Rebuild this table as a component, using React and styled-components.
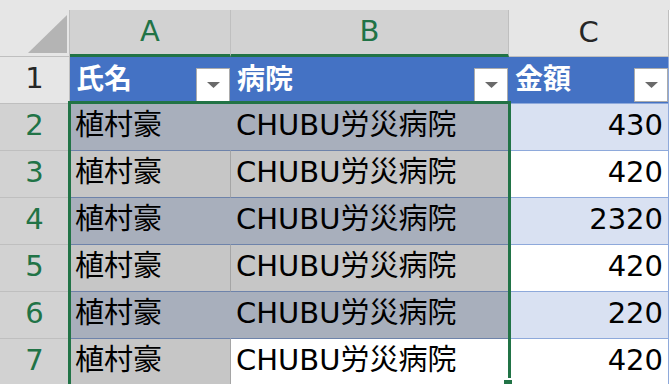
import React from 'react'
import styled, { createGlobalStyle } from 'styled-components'

const GREEN = '#217346'

const GlobalStyle = createGlobalStyle`
    body {
        margin: 0;
        background: #fff;
        font-family: "DejaVu Sans", "Noto Sans CJK JP", sans-serif;
    }
`

const Page = styled.div`
    width: 670px;
    height: 384px;
    overflow: hidden;
    background: #fff;
`
const TopStrip = styled.div`
    height: 10px;
    background: #e6e6e6;
`
const Sheet = styled.div`
    position: relative;
    display: grid;
    grid-template-columns: 70px 161px 278px 160px;
    grid-auto-rows: 47px;
    font-size: 29px;
    line-height: 1.2;
`
const Corner = styled.div`
    background: #e6e6e6;
    border-right: 1px solid #bfbfbf;
    border-bottom: 1px solid #bfbfbf;

    svg {
        display: block;
    }
`
const ColHeader = styled.div`
    display: flex;
    align-items: center;
    justify-content: center;
    padding-bottom: 2px;
    box-sizing: border-box;
    background: ${p => (p.$selected ? '#d2d2d2' : '#e6e6e6')};
    color: ${p => (p.$selected ? GREEN : '#262626')};
    border-right: 1px solid #bfbfbf;
    border-bottom: ${p => (p.$selected ? `3px solid ${GREEN}` : '1px solid #bfbfbf')};
`
const RowHeader = styled.div`
    display: flex;
    align-items: center;
    justify-content: center;
    padding-bottom: 4px;
    box-sizing: border-box;
    background: ${p => (p.$selected ? '#d2d2d2' : '#e6e6e6')};
    color: ${p => (p.$selected ? GREEN : '#262626')};
    border-right: 1px solid ${p => (p.$selected ? GREEN : '#bfbfbf')};
    border-bottom: 1px solid #bfbfbf;
`
const HeadCell = styled.div`
    display: flex;
    align-items: center;
    justify-content: space-between;
    box-sizing: border-box;
    padding-left: 6px;
    background: #4472c4;
    color: #fff;
    font-size: 28px;
    font-weight: 700;
    border-right: 1px solid ${p => (p.$last ? '#8ea9db' : '#4472c4')};
    border-bottom: 1px solid #8ea9db;
`
const FilterButton = styled.div`
    align-self: flex-end;
    width: 34px;
    height: 34px;
    margin-bottom: 1px;
    box-sizing: border-box;
    display: flex;
    align-items: center;
    justify-content: center;
    background: #fff;
    border: 1px solid #ababab;
`
const Cell = styled.div`
    display: flex;
    align-items: center;
    justify-content: ${p => (p.$num ? 'flex-end' : 'flex-start')};
    box-sizing: border-box;
    padding: 0 5px 4px 5px;
    color: #000;
    background: ${p => (p.$band ? (p.$sel ? '#a8afbc' : '#d9e1f2') : (p.$sel ? '#c6c6c6' : '#fff'))};
    border-bottom: 1px solid ${p => (p.$sel ? '#6e83aa' : '#8ea9db')};
    border-right: 1px solid ${p =>
        p.$last ? '#8ea9db' : p.$band ? (p.$sel ? '#a8afbc' : '#d9e1f2') : (p.$sel ? '#a5a5a5' : '#d4d4d4')};
    white-space: nowrap;
`
const Selection = styled.div`
    position: absolute;
    left: 68px;
    top: 91px;
    width: 443px;
    height: 300px;
    box-sizing: border-box;
    border: 3px solid ${GREEN};
    pointer-events: none;
`
const FillHandle = styled.div`
    position: absolute;
    left: 502px;
    top: 368px;
    width: 8px;
    height: 8px;
    background: ${GREEN};
    border: 2px solid #fff;
`

const rows = [
    { n: 2, amount: 430 },
    { n: 3, amount: 420 },
    { n: 4, amount: 2320 },
    { n: 5, amount: 420 },
    { n: 6, amount: 220 },
    { n: 7, amount: 420 },
]

const Arrow = () => (
    <svg width="13" height="6" viewBox="0 0 13 6">
        <polygon points="0,0 13,0 6.5,6" fill="#6a6a6a" />
    </svg>
)

const App = () => {
    return (
        <Page>
            <GlobalStyle />
            <TopStrip />
            <Sheet>
                <Corner>
                    <svg width="69" height="46" viewBox="0 0 69 46">
                        <polygon points="67,5 67,43 28,43" fill="#b4b4b4" />
                    </svg>
                </Corner>
                <ColHeader $selected>A</ColHeader>
                <ColHeader $selected>B</ColHeader>
                <ColHeader>C</ColHeader>

                <RowHeader>1</RowHeader>
                <HeadCell>
                    氏名
                    <FilterButton><Arrow /></FilterButton>
                </HeadCell>
                <HeadCell>
                    病院
                    <FilterButton><Arrow /></FilterButton>
                </HeadCell>
                <HeadCell $last>
                    金額
                    <FilterButton><Arrow /></FilterButton>
                </HeadCell>

                {rows.map(r => {
                    const band = r.n % 2 === 0
                    const active = r.n === 7
                    return (
                        <React.Fragment key={r.n}>
                            <RowHeader $selected>{r.n}</RowHeader>
                            <Cell $band={band} $sel>植村豪</Cell>
                            <Cell $band={band} $sel={!active}>CHUBU労災病院</Cell>
                            <Cell $band={band} $num $last>{r.amount}</Cell>
                        </React.Fragment>
                    )
                })}

                <Selection />
                <FillHandle />
            </Sheet>
        </Page>
    )
}

export default App
